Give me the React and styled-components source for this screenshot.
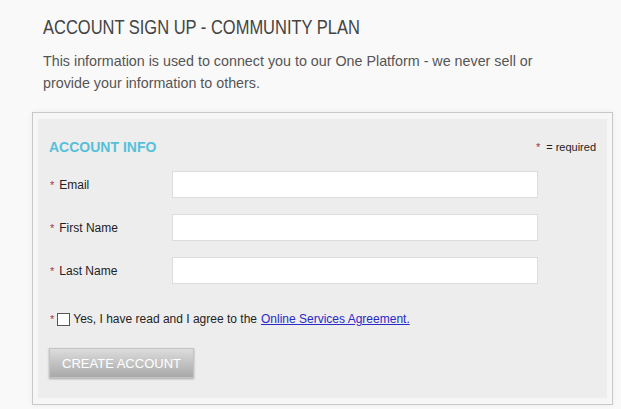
import React from 'react';
import styled, { createGlobalStyle } from 'styled-components';

const GlobalStyle = createGlobalStyle`
  html, body {
    margin: 0;
    padding: 0;
    background: #f9f9f9;
    font-family: "Liberation Sans", Arial, sans-serif;
  }
`;

const Page = styled.div`
  width: 621px;
  height: 409px;
  overflow: hidden;
  padding: 13px 0 0 32px;
  box-sizing: border-box;
`;

// reference uses a narrow face; squeeze the regular one to match
const Title = styled.h1`
  margin: 0 0 0 11px;
  font-size: 21px;
  font-weight: normal;
  color: #444;
  line-height: 28px;
  white-space: nowrap;
  transform: scaleX(0.785);
  transform-origin: left center;
`;

const Intro = styled.p`
  margin: 9px 0 0 11px;
  width: 520px;
  font-size: 14.3px;
  line-height: 22px;
  color: #555;
`;

const Box = styled.div`
  margin-top: 18px;
  width: 581px;
  border: 1px solid #c8c8c8;
  box-shadow: 0 0 6px rgba(0, 0, 0, 0.06);
  background: #f6f6f6;
  padding: 6px 5px 6px 5px;
  box-sizing: border-box;
`;

const Inner = styled.div`
  background: #ededed;
  padding: 20px 11px 20px 11px;
`;

const Header = styled.div`
  display: flex;
  justify-content: space-between;
  align-items: center;
  margin-bottom: 16px;
`;

const SectionTitle = styled.h2`
  margin: 0;
  font-size: 14px;
  font-weight: bold;
  color: #55c0d9;
`;

const Required = styled.span`
  font-size: 11px;
  color: #222;
  display: flex;
`;

const Star = styled.span`
  color: #a0353d;
  font-size: 11px;
  margin-right: ${(p) => p.gap || 5}px;
`;

const Row = styled.div`
  display: flex;
  align-items: center;
  margin-bottom: 16px;
`;

const Label = styled.label`
  width: 122px;
  flex: none;
  font-size: 12px;
  color: #222;
  display: flex;
  align-items: center;
  padding-left: 1px;
`;

const Input = styled.input`
  width: 366px;
  height: 27px;
  box-sizing: border-box;
  border: 1px solid #dcdcdc;
  background: #fff;
  margin: 0;
`;

const Agree = styled.div`
  display: flex;
  align-items: center;
  font-size: 12px;
  color: #222;
  margin-top: 28px;
  padding-left: 1px;
`;

const Check = styled.span`
  width: 11px;
  height: 11px;
  border: 1px solid #555;
  background: #fff;
  margin-right: 3px;
`;

const Link = styled.a`
  color: #2a2ac8;
  text-decoration: underline;
  margin-left: 4px;
`;

const Button = styled.button`
  display: block;
  margin-top: 22px;
  width: 145px;
  height: 30px;
  border: 1px solid #c4c4c4;
  background: linear-gradient(#dcdcdc, #a9a9a9);
  color: #fff;
  font-family: "Liberation Sans", Arial, sans-serif;
  font-size: 13px;
  box-shadow: 0 1px 2px rgba(0, 0, 0, 0.3);
  padding: 0;
`;

const fields = ['Email', 'First Name', 'Last Name'];

export default function App() {
  return (
    <Page>
      <GlobalStyle />
      <Title>ACCOUNT SIGN UP - COMMUNITY PLAN</Title>
      <Intro>
        This information is used to connect you to our One Platform - we never sell or provide your information to others.
      </Intro>
      <Box>
        <Inner>
          <Header>
            <SectionTitle>ACCOUNT INFO</SectionTitle>
            <Required>
              <Star gap={6}>*</Star> = required
            </Required>
          </Header>
          {fields.map((f) => (
            <Row key={f}>
              <Label>
                <Star>*</Star>
                {f}
              </Label>
              <Input type="text" />
            </Row>
          ))}
          <Agree>
            <Star gap={3}>*</Star>
            <Check />
            Yes, I have read and I agree to the
            <Link href="#">Online Services Agreement.</Link>
          </Agree>
          <Button>CREATE ACCOUNT</Button>
        </Inner>
      </Box>
    </Page>
  );
}
